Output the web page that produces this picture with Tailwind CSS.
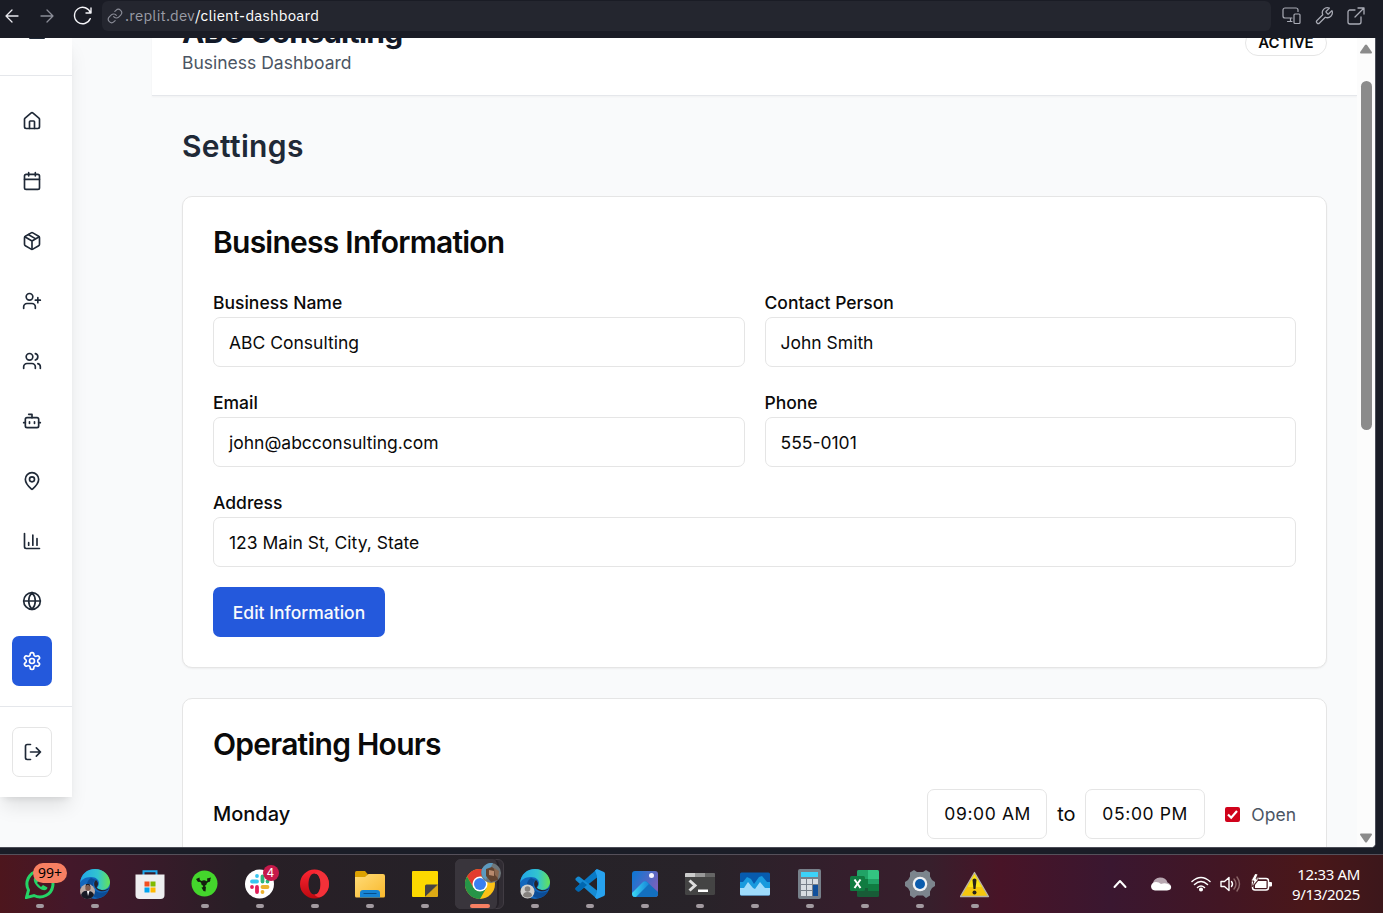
<!DOCTYPE html>
<html lang="en">
<head>
<meta charset="utf-8">
<title>Client Dashboard</title>
<script src="https://cdn.jsdelivr.net/npm/@tailwindcss/browser@4"></script>
</head>
<body class="flex h-screen w-screen flex-col overflow-hidden bg-[#1a1d27] font-['Inter',sans-serif] text-[17.5px] text-[#0a0a0a]">

<!-- Browser bar -->
<header class="flex h-[38px] shrink-0 items-start bg-[#1a1c25] font-['IBM_Plex_Sans','Noto_Sans',sans-serif]">
  <div class="flex h-8 w-[102px] items-center gap-[13px] pl-[1px]">
    <svg class="size-[22px] shrink-0" viewBox="0 0 22 22" fill="none" stroke="#e8e8ee" stroke-width="1.3" stroke-linecap="round" stroke-linejoin="round"><path d="M17 11H5m6-6-6 6 6 6"/></svg>
    <svg class="size-[22px] shrink-0" viewBox="0 0 22 22" fill="none" stroke="#8b8d98" stroke-width="1.3" stroke-linecap="round" stroke-linejoin="round"><path d="M5 11h12m-6-6 6 6-6 6"/></svg>
    <svg class="size-[22px] shrink-0" viewBox="0 0 22 22" fill="none" stroke="#f4f4f8" stroke-width="1.4" stroke-linecap="round" stroke-linejoin="round"><path d="M20 3v5h-5M19.500 8A8.200 8.200 0 1 0 19.300 13.600"/></svg>
  </div>
  <div class="mt-px flex h-[30px] w-[1169px] items-center rounded-md bg-[#24262f] pl-[5px] text-[15px] leading-5 tracking-[0.22px] text-white">
    <svg class="mr-[2px] size-4" viewBox="0 0 24 24" fill="none" stroke="#8b8d98" stroke-width="1.7" stroke-linecap="round"><path d="M10 13a5 5 0 0 0 7.540.540l3-3a5 5 0 0 0-7.070-7.070l-1.720 1.710M14 11a5 5 0 0 0-7.540-.540l-3 3a5 5 0 0 0 7.070 7.070l1.710-1.710"/></svg>
    <p><span class="text-[#9a9ca6]">.replit.dev</span>/client-dashboard</p>
  </div>
  <div class="flex h-8 items-center gap-[13px] pl-[10px] text-[#a9abb5]">
    <svg class="size-5" viewBox="0 0 20 20" fill="none" stroke="currentColor" stroke-width="1.2" stroke-linejoin="round" stroke-linecap="round"><path d="M17 5.500V4a2 2 0 0 0-2-2H4a2 2 0 0 0-2 2v6a2 2 0 0 0 2 2h7M9.500 12v3.500M6.500 15.500H11"/><rect x="13" y="8" width="6" height="9.500" rx="1"/></svg>
    <svg class="size-5" viewBox="0 0 24 24" fill="none" stroke="currentColor" stroke-width="1.5" stroke-linejoin="round"><path d="M14.700 6.300a1 1 0 0 0 0 1.400l1.600 1.600a1 1 0 0 0 1.400 0l3.770-3.770a6 6 0 0 1-7.940 7.940l-6.910 6.910a2.120 2.120 0 0 1-3-3l6.910-6.910a6 6 0 0 1 7.940-7.940l-3.760 3.760z"/></svg>
    <svg class="-ml-px size-5" viewBox="0 0 20 20" fill="none" stroke="currentColor" stroke-width="1.300" stroke-linecap="round" stroke-linejoin="round"><path d="M9 4H4a2 2 0 0 0-2 2v10a2 2 0 0 0 2 2h9a2 2 0 0 0 2-2v-5M12 2h6v6M18 2l-9 9"/></svg>
  </div>
</header>

<!-- Page viewport -->
<div class="flex h-[810px] w-[1376px] shrink-0 overflow-hidden rounded-br-[5px] border-r border-b border-[#4b4d57] bg-[#f9fafb]">
  <aside class="z-10 flex h-[759px] w-[72px] shrink-0 flex-col bg-white text-[#1f2937] shadow-[0_12px_18px_-3px_rgb(0_0_0/0.1),0_5px_7px_-4px_rgb(0_0_0/0.1)]">
    <div class="flex h-[38px] shrink-0 justify-center border-b border-[#e5e7eb]"><div class="ml-[2px] h-px w-4 rounded-b-sm bg-[#1f2937]"></div></div>
    <nav class="flex flex-col gap-[10px] px-3 py-5">
      <a class="flex h-[50px] w-10 items-center justify-center"><svg class="size-5" viewBox="0 0 24 24" fill="none" stroke="currentColor" stroke-width="2" stroke-linecap="round" stroke-linejoin="round"><path d="M15 21v-8a1 1 0 0 0-1-1h-4a1 1 0 0 0-1 1v8"/><path d="M3 10a2 2 0 0 1 .709-1.528l7-5.999a2 2 0 0 1 2.582 0l7 5.999A2 2 0 0 1 21 10v9a2 2 0 0 1-2 2H5a2 2 0 0 1-2-2z"/></svg></a>
      <a class="flex h-[50px] w-10 items-center justify-center"><svg class="size-5" viewBox="0 0 24 24" fill="none" stroke="currentColor" stroke-width="2" stroke-linecap="round" stroke-linejoin="round"><path d="M8 2v4M16 2v4M3 10h18"/><rect width="18" height="18" x="3" y="4" rx="2"/></svg></a>
      <a class="flex h-[50px] w-10 items-center justify-center"><svg class="size-5" viewBox="0 0 24 24" fill="none" stroke="currentColor" stroke-width="2" stroke-linecap="round" stroke-linejoin="round"><path d="M11 21.730a2 2 0 0 0 2 0l7-4A2 2 0 0 0 21 16V8a2 2 0 0 0-1-1.730l-7-4a2 2 0 0 0-2 0l-7 4A2 2 0 0 0 3 8v8a2 2 0 0 0 1 1.730z"/><path d="M12 22V12M3.300 7 12 12l8.700-5M7.500 4.270l9 5.150"/></svg></a>
      <a class="flex h-[50px] w-10 items-center justify-center"><svg class="size-5" viewBox="0 0 24 24" fill="none" stroke="currentColor" stroke-width="2" stroke-linecap="round" stroke-linejoin="round"><path d="M16 21v-2a4 4 0 0 0-4-4H6a4 4 0 0 0-4 4v2"/><circle cx="9" cy="7" r="4"/><path d="M19 8v6M22 11h-6"/></svg></a>
      <a class="flex h-[50px] w-10 items-center justify-center"><svg class="size-5" viewBox="0 0 24 24" fill="none" stroke="currentColor" stroke-width="2" stroke-linecap="round" stroke-linejoin="round"><path d="M16 21v-2a4 4 0 0 0-4-4H6a4 4 0 0 0-4 4v2"/><circle cx="9" cy="7" r="4"/><path d="M22 21v-2a4 4 0 0 0-3-3.870M16 3.130a4 4 0 0 1 0 7.750"/></svg></a>
      <a class="flex h-[50px] w-10 items-center justify-center"><svg class="size-5" viewBox="0 0 24 24" fill="none" stroke="currentColor" stroke-width="2" stroke-linecap="round" stroke-linejoin="round"><path d="M12 8V4H8"/><rect width="16" height="12" x="4" y="8" rx="2"/><path d="M2 14h2M20 14h2M15 13v2M9 13v2"/></svg></a>
      <a class="flex h-[50px] w-10 items-center justify-center"><svg class="size-5" viewBox="0 0 24 24" fill="none" stroke="currentColor" stroke-width="2" stroke-linecap="round" stroke-linejoin="round"><path d="M20 10c0 4.993-5.539 10.193-7.399 11.799a1 1 0 0 1-1.202 0C9.539 20.193 4 14.993 4 10a8 8 0 0 1 16 0"/><circle cx="12" cy="10" r="3"/></svg></a>
      <a class="flex h-[50px] w-10 items-center justify-center"><svg class="size-5" viewBox="0 0 24 24" fill="none" stroke="currentColor" stroke-width="2" stroke-linecap="round" stroke-linejoin="round"><path d="M3 3v16a2 2 0 0 0 2 2h16M18 17V9M13 17V5M8 17v-3"/></svg></a>
      <a class="flex h-[50px] w-10 items-center justify-center"><svg class="size-5" viewBox="0 0 24 24" fill="none" stroke="currentColor" stroke-width="2" stroke-linecap="round" stroke-linejoin="round"><circle cx="12" cy="12" r="10"/><path d="M12 2a14.500 14.500 0 0 0 0 20 14.500 14.500 0 0 0 0-20M2 12h20"/></svg></a>
      <a class="flex h-[50px] w-10 items-center justify-center rounded-[7px] bg-[#2459dc] text-white"><svg class="size-5" viewBox="0 0 24 24" fill="none" stroke="currentColor" stroke-width="2" stroke-linecap="round" stroke-linejoin="round"><path d="M12.220 2h-.440a2 2 0 0 0-2 2v.180a2 2 0 0 1-1 1.730l-.430.250a2 2 0 0 1-2 0l-.150-.080a2 2 0 0 0-2.730.730l-.220.380a2 2 0 0 0 .730 2.730l.150.100a2 2 0 0 1 1 1.720v.510a2 2 0 0 1-1 1.740l-.150.090a2 2 0 0 0-.730 2.730l.220.380a2 2 0 0 0 2.730.730l.150-.080a2 2 0 0 1 2 0l.430.250a2 2 0 0 1 1 1.730V20a2 2 0 0 0 2 2h.440a2 2 0 0 0 2-2v-.180a2 2 0 0 1 1-1.730l.430-.250a2 2 0 0 1 2 0l.150.080a2 2 0 0 0 2.730-.730l.220-.390a2 2 0 0 0-.730-2.730l-.150-.080a2 2 0 0 1-1-1.740v-.500a2 2 0 0 1 1-1.740l.150-.090a2 2 0 0 0 .730-2.730l-.220-.380a2 2 0 0 0-2.730-.730l-.150.080a2 2 0 0 1-2 0l-.430-.250a2 2 0 0 1-1-1.730V4a2 2 0 0 0-2-2z"/><circle cx="12" cy="12" r="3"/></svg></a>
    </nav>
    <div class="border-t border-[#e5e7eb] px-3 pt-5">
      <a class="flex h-[50px] w-10 items-center justify-center rounded-[7px] border border-[#e5e5e5] pl-[2px]"><svg class="size-5" viewBox="0 0 24 24" fill="none" stroke="currentColor" stroke-width="2" stroke-linecap="round" stroke-linejoin="round"><path d="M9 21H5a2 2 0 0 1-2-2V5a2 2 0 0 1 2-2h4M16 17l5-5-5-5M21 12H9"/></svg></a>
    </div>
  </aside>

  <main class="ml-20 flex w-[1205px] shrink-0 flex-col">
    <div class="flex h-[58px] shrink-0 items-end justify-between border-b border-[#e5e7eb] bg-white px-[30px] shadow-[0_1px_2px_rgb(0_0_0/0.04)]">
      <div class="pb-5">
        <h1 class="text-[30px] leading-9 font-bold tracking-[-0.8px] text-[#111827]">ABC Consulting</h1>
        <p class="leading-[25px] text-[#4b5563]">Business Dashboard</p>
      </div>
      <span class="mb-[39px] flex h-[26px] w-[82px] items-center justify-center rounded-full border border-[#e5e5e5] text-[15px] leading-5 font-semibold">ACTIVE</span>
    </div>

    <div class="flex flex-col px-[30px] pt-[30px]">
      <h2 class="mb-[30px] text-[30px] leading-10 font-semibold tracking-[0.35px] text-[#1f2937]">Settings</h2>

      <section class="mb-[30px] h-[472px] shrink-0 rounded-[10px] border border-[#e5e5e5] bg-white p-[30px] shadow-[0_1px_2px_rgb(0_0_0/0.05)]">
        <h3 class="mb-[30px] text-[30px] leading-[30px] font-semibold tracking-tight">Business Information</h3>
        <div class="grid grid-cols-2 gap-5">
          <label class="flex flex-col"><span class="h-[30px] leading-[32px] font-medium">Business Name</span><span class="flex h-[50px] items-center rounded-[7px] border border-[#e5e5e5] px-[15px] pt-[2px]">ABC Consulting</span></label>
          <label class="flex flex-col"><span class="h-[30px] leading-[32px] font-medium">Contact Person</span><span class="flex h-[50px] items-center rounded-[7px] border border-[#e5e5e5] px-[15px] pt-[2px]">John Smith</span></label>
          <label class="flex flex-col"><span class="h-[30px] leading-[32px] font-medium">Email</span><span class="flex h-[50px] items-center rounded-[7px] border border-[#e5e5e5] px-[15px] pt-[2px]">john@abcconsulting.com</span></label>
          <label class="flex flex-col"><span class="h-[30px] leading-[32px] font-medium">Phone</span><span class="flex h-[50px] items-center rounded-[7px] border border-[#e5e5e5] px-[15px] pt-[2px]">555-0101</span></label>
          <label class="col-span-2 flex flex-col"><span class="h-[30px] leading-[32px] font-medium">Address</span><span class="flex h-[50px] items-center rounded-[7px] border border-[#e5e5e5] px-[15px] pt-[2px]">123 Main St, City, State</span></label>
        </div>
        <button class="mt-5 h-[50px] w-[172px] rounded-[7px] bg-[#2459dc] pt-[2px] font-medium text-[#f8fafc]">Edit Information</button>
      </section>

      <section class="h-[300px] shrink-0 rounded-[10px] border border-[#e5e5e5] bg-white p-[30px]">
        <h3 class="mb-[30px] text-[30px] leading-[30px] font-semibold tracking-tight">Operating Hours</h3>
        <div class="flex h-[50px] items-center">
          <span class="mr-auto text-xl font-medium">Monday</span>
          <span class="flex h-[50px] w-[120px] items-center rounded-[7px] border border-[#e5e5e5] px-4 tracking-[0.6px] whitespace-nowrap">09:00 AM</span>
          <span class="w-[38px] text-center text-xl">to</span>
          <span class="mr-5 flex h-[50px] w-[120px] items-center rounded-[7px] border border-[#e5e5e5] px-4 tracking-[0.6px] whitespace-nowrap">05:00 PM</span>
          <svg class="mr-[11px] size-[15px]" viewBox="0 0 15 15"><rect width="15" height="15" rx="2" fill="#d0021b"/><path d="m3 7.500 3.200 3.200L12 4" fill="none" stroke="#fff" stroke-width="2.200"/></svg>
          <span class="pt-[2px] text-[#4b5563]">Open</span>
        </div>
      </section>
    </div>
  </main>

  <div class="flex w-[18px] shrink-0 flex-col items-center bg-[#fcfcfc]">
    <svg class="mt-[6px] h-[10px] w-3 shrink-0" viewBox="0 0 12 10"><path d="M5 1Q6 0 7 1l5 7.200q0 1.300-1 1.300H1q-1 0-1-1.300z" fill="#8b8b8b"/></svg>
    <div class="mt-[27px] h-[349px] w-[11px] shrink-0 rounded-full bg-[#8b8b8b]"></div>
    <svg class="mt-auto mb-[4px] h-[10px] w-3 shrink-0 rotate-180" viewBox="0 0 12 10"><path d="M5 1Q6 0 7 1l5 7.200q0 1.300-1 1.300H1q-1 0-1-1.300z" fill="#8b8b8b"/></svg>
  </div>
</div>

<!-- Taskbar -->
<footer class="mt-[6px] flex h-[59px] shrink-0 border-t border-[#55505a] bg-[linear-gradient(90deg,#4d161d_0,#43182a_70px,#3a1a2a_140px,#281f26_240px,#252228_500px,#282329_700px,#351e2c_850px,#371f2c_930px,#481427_1000px,#3a1730_1110px,#421624_1220px,#4a1719_1310px,#3c171b_1383px)] pl-[12.500px]">
  <!-- WhatsApp -->
  <div class="relative flex w-[55px] flex-col items-center pt-[14px]">
    <svg class="size-[30px]" viewBox="0 0 30 30"><path d="m1.500 28.500 2-7.400A13 13 0 1 1 9 26.500z" fill="none" stroke="#25d366" stroke-width="3"/><path d="M10 8c-3 2 0 8 4 11s8 3 8.500-.5L18 16l-2 2-4-4 1.500-2L11.500 8z" fill="#25d366"/></svg>
    <span class="mt-[5px] h-1 w-2 rounded-full bg-[#a29aa0]"></span>
    <span class="absolute top-[8px] left-[20.500px] flex h-5 w-[34px] items-center justify-center rounded-full bg-[#f77f62] font-['Noto_Sans',sans-serif] text-[14px] leading-5 text-black">99+</span>
  </div>
  <!-- Edge -->
  <div class="relative flex w-[55px] flex-col items-center pt-[14px]">
    <svg class="size-[30px]" viewBox="0 0 30 30"><defs><linearGradient id="eg"><stop stop-color="#21a5ea"/><stop offset=".6" stop-color="#32c5cf"/><stop offset="1" stop-color="#65e256"/></linearGradient></defs><circle cx="15" cy="15" r="15" fill="#1267bd"/><path d="M0 14C1 5 7 0 15 0c9 0 15 7 15 13 0 5-4 8-8 8-3 0-5-1-5-2s2-2 2-5c0-3-3-6-8-6-6 0-10 3-11 6z" fill="url(#eg)"/><path d="M11 9c-8 5-4 18 7 20 5 0 9-4 10-7-9 4-15 0-15-6 0-3 2-5 3-5z" fill="#0b4c96"/><path d="M17 19c-1-1 1-2 1-4 0-2-1-3-2-4-4 3-1 10 4 11 4 1 9-1 10-4-3 4-9 4-13 1z" fill="#252129"/><circle cx="7.500" cy="22.500" r="7.500" fill="#b9aaa5"/><circle cx="8" cy="19" r="2.700" fill="#805d50"/><path d="M5.500 18q2-4 5 0l-1-3H6z" fill="#241d20"/><path d="M1 26q2-5 7-4 5 0 6 4-2 4-7 4-4 0-6-4z" fill="#171a25"/><path d="m7 22 1 5 1.500-5z" fill="#fff"/></svg>
    <span class="mt-[5px] h-1 w-2 rounded-full bg-[#a29aa0]"></span>
  </div>
  <!-- Store -->
  <div class="flex w-[55px] flex-col items-center pt-[14px]">
    <svg class="size-[30px]" viewBox="0 0 30 30"><path d="M8.500 7V2.200h13V7" fill="none" stroke="#20a9ee" stroke-width="2"/><path d="M.5 5.500h29V26q0 4-4 4h-21q-4 0-4-4z" fill="#eeeef0"/><path d="M9.500 12.500h5v5h-5z" fill="#f25022"/><path d="M15.500 12.500h5v5h-5z" fill="#7fba00"/><path d="M9.500 18.500h5v5h-5z" fill="#00a4ef"/><path d="M15.500 18.500h5v5h-5z" fill="#ffb900"/></svg>
  </div>
  <!-- Razer -->
  <div class="flex w-[55px] flex-col items-center pt-[14px]">
    <svg class="size-[30px]" viewBox="0 0 30 30"><circle cx="14.500" cy="14.500" r="13" fill="#44d62c"/><path d="M14.500 14.500 8 11M14.500 14.500 20 11M14 14v6" fill="none" stroke="#14210f" stroke-width="1.800"/><circle cx="14" cy="14" r="2.800" fill="#14210f"/><path d="m6 10 3.500-1.500.5 4-2 .5zM17 9.500l4-1-1.500 4.500-2-.5zM11.500 18.500l4.500-1-.5 5-2-.5z" fill="#14210f"/></svg>
    <span class="mt-[5px] h-1 w-2 rounded-full bg-[#a29aa0]"></span>
  </div>
  <!-- Slack -->
  <div class="relative flex w-[55px] flex-col items-center pt-[14px]">
    <svg class="size-[30px]" viewBox="0 0 30 30"><circle cx="14.500" cy="15" r="14.500" fill="#fff"/><g fill="none" stroke-width="3.800" stroke-linecap="round"><path d="M12 12.500H7M12 7v0" stroke="#36c5f0"/><path d="M17.500 12.500v-5M22.500 12.500v0" stroke="#2eb67d"/><path d="M17.500 18h5M17.500 23v0" stroke="#ecb22e"/><path d="M12 18v5M7 18v0" stroke="#e01e5a"/></g></svg>
    <span class="mt-[5px] h-1 w-2 rounded-full bg-[#a29aa0]"></span>
    <span class="absolute top-[10px] left-[30px] flex size-4 items-center justify-center rounded-full bg-[#c51a4a] text-[12px] leading-4 text-white">4</span>
  </div>
  <!-- Opera -->
  <div class="flex w-[55px] flex-col items-center pt-[14px]">
    <svg class="size-[30px]" viewBox="0 0 30 30"><defs><linearGradient id="op" x2="0" y2="1"><stop stop-color="#ff2633"/><stop offset="1" stop-color="#bb0910"/></linearGradient></defs><path fill-rule="evenodd" d="M14.500.5a14.500 14.500 0 0 0 0 29 14.500 14.500 0 0 0 0-29m0 4c4 0 6 5 6 10.500s-2 10.500-6 10.500S8.500 20.500 8.500 15s2-10.500 6-10.500" fill="url(#op)"/><path d="M14.500 25.500c4 0 6-5 6-10.500s-2-10.500-6-10.500C17 1 21 1 24.500 4.500a14.500 14.500 0 0 1 0 21C21 29 17 29 14.500 25.500z" fill="#f33139"/></svg>
    <span class="mt-[5px] h-1 w-2 rounded-full bg-[#a29aa0]"></span>
  </div>
  <!-- Explorer -->
  <div class="flex w-[55px] flex-col items-center pt-[14px]">
    <svg class="size-[30px]" viewBox="0 0 30 30"><defs><linearGradient id="fo" x2="1" y2="1"><stop stop-color="#ffdc78"/><stop offset="1" stop-color="#f9b82c"/></linearGradient></defs><path d="M0 3.500Q0 2 1.500 2H10l3 3.500-3 4H0z" fill="#dca100"/><path d="M0 8h10l3.500-3H28q2 0 2 2v20q0 1.500-1.500 1.500h-27Q0 28.500 0 27z" fill="url(#fo)"/><path d="M5 28.500V24q0-3 3-3h14q3 0 3 3v4.500z" fill="#1684d4"/><path d="M8.500 24.500h13" stroke="#064f8c" stroke-width="1"/></svg>
    <span class="mt-[5px] h-1 w-2 rounded-full bg-[#a29aa0]"></span>
  </div>
  <!-- Sticky notes -->
  <div class="flex w-[55px] flex-col items-center pt-[14px]">
    <svg class="size-[30px]" viewBox="0 0 30 30"><path d="M2 3q0-1 1-1h24q1 0 1 1v12.500L15.500 28H3q-1 0-1-1z" fill="#fcd800"/><path d="M15 17q0-1.500 1.500-1.500H28L15 28z" fill="#454343"/><path d="M28 15.500V27q0 1-1 1H15z" fill="#dca914"/></svg>
    <span class="mt-[5px] h-1 w-2 rounded-full bg-[#a29aa0]"></span>
  </div>
  <!-- Chrome -->
  <div class="relative flex w-[55px] flex-col items-center pt-[14px]">
    <span class="absolute top-[4px] left-[2.500px] h-[50px] w-[49px] rounded-md border border-[#413c43] bg-[#302c33]"></span>
    <span class="absolute top-[4px] left-[2.500px] h-[50px] w-[44px] rounded-md border-r-2 border-[#252128] bg-[#39353c]"></span>
    <svg class="relative size-[30px]" viewBox="0 0 30 30"><circle cx="15" cy="15" r="15" fill="#fbc116"/><path d="M2 7.500A15 15 0 0 1 28 7.500H15L8.500 18.800z" fill="#e33b2e"/><path d="M2 7.500A15 15 0 0 0 15 30l6.500-11.200H8.500z" fill="#269447"/><circle cx="15" cy="15" r="7.500" fill="#fff"/><circle cx="15" cy="15" r="6" fill="#397ff0"/></svg>
    <svg class="absolute top-[8px] left-[28px] size-5" viewBox="0 0 20 20"><circle cx="10" cy="10" r="10" fill="#6e777b"/><path d="M1 6Q5-1 12 0L8 8l-3 9Q-1 13 1 6z" fill="#5c9ac0"/><path d="m5 6 6-2 5 4 1 9-7 2-5-6z" fill="#624330"/><path d="m8 7 5 1v5l-5-1z" fill="#b98a6e"/><path d="m13 5 5 3-1 7-3-3z" fill="#8b6851"/></svg>
    <span class="relative mt-[5px] h-1 w-5 rounded-full bg-[#f77f62]"></span>
  </div>
  <!-- Edge, guest profile -->
  <div class="flex w-[55px] flex-col items-center pt-[14px]">
    <svg class="size-[30px]" viewBox="0 0 30 30"><circle cx="15" cy="15" r="15" fill="#1267bd"/><path d="M0 14C1 5 7 0 15 0c9 0 15 7 15 13 0 5-4 8-8 8-3 0-5-1-5-2s2-2 2-5c0-3-3-6-8-6-6 0-10 3-11 6z" fill="url(#eg)"/><path d="M11 9c-8 5-4 18 7 20 5 0 9-4 10-7-9 4-15 0-15-6 0-3 2-5 3-5z" fill="#0b4c96"/><path d="M17 19c-1-1 1-2 1-4 0-2-1-3-2-4-4 3-1 10 4 11 4 1 9-1 10-4-3 4-9 4-13 1z" fill="#252129"/><circle cx="7.500" cy="22.500" r="7" fill="#d0cfcd"/><circle cx="7.500" cy="20" r="2.800" fill="#85817e"/><path d="M3 27q0-4 4.500-4t4.500 4q-4 3-9 0z" fill="#85817e"/></svg>
    <span class="mt-[5px] h-1 w-2 rounded-full bg-[#a29aa0]"></span>
  </div>
  <!-- VS Code -->
  <div class="flex w-[55px] flex-col items-center pt-[14px]">
    <svg class="size-[30px]" viewBox="0 0 30 30"><path d="m.5 19 0 1.500 2 1.800q1 .5 2 0L22 8.500V0z" fill="#0879c6"/><path d="M.5 11V9.500l2-1.800q1-.5 2 0L22 21.500V30z" fill="#168bd3"/><path d="m.5 19 0 1.500 2 1.800q1 .5 2 0L12 16l-4.500-3.500z" fill="#0067b0"/><path d="m22 0 7 3q1 .5 1 2v20q0 1.500-1 2l-7 3-2-1.500 2-5.500V7l-2-5.500z" fill="#27a2ee"/></svg>
    <span class="mt-[5px] h-1 w-2 rounded-full bg-[#a29aa0]"></span>
  </div>
  <!-- Photos -->
  <div class="flex w-[55px] flex-col items-center pt-[14px]">
    <svg class="size-[30px]" viewBox="0 0 30 30"><defs><linearGradient id="ph" x2="1" y2=".5"><stop stop-color="#0878d5"/><stop offset="1" stop-color="#7761bd"/></linearGradient><linearGradient id="pm" x2="1"><stop stop-color="#3bdaf5"/><stop offset="1" stop-color="#1686d9"/></linearGradient></defs><rect x="2" y="2" width="26" height="26" rx="3" fill="url(#ph)"/><path d="m3 24 11-11q1.500-1.500 3 0L28 23v2q0 3-3 3H5q-3 0-2-4z" fill="#1370c0"/><path d="m2 24 11-11q2-1.500 4 0l2 2L6 28H5q-3 0-3-4z" fill="url(#pm)"/><circle cx="21.500" cy="6.500" r="2.500" fill="#f5f4ff"/></svg>
    <span class="mt-[5px] h-1 w-2 rounded-full bg-[#a29aa0]"></span>
  </div>
  <!-- Terminal -->
  <div class="flex w-[55px] flex-col items-center pt-[14px]">
    <svg class="size-[30px]" viewBox="0 0 30 30"><rect y="4" width="30" height="22" rx="1.500" fill="#444"/><path d="M0 8V5q0-1 1-1h9v4z" fill="#ccc"/><path d="M10 4h10v4H10z" fill="#999"/><path d="M20 4h9q1 0 1 1v3H20z" fill="#666"/><path d="m4.500 11.500 5.500 5-5.500 5" fill="none" stroke="#ddd" stroke-width="3"/><path d="M13 20.500h10V23H13z" fill="#fff"/></svg>
    <span class="mt-[5px] h-1 w-2 rounded-full bg-[#a29aa0]"></span>
  </div>
  <!-- Task monitor -->
  <div class="flex w-[55px] flex-col items-center pt-[14px]">
    <svg class="size-[30px]" viewBox="0 0 30 30"><rect y="3.500" width="30" height="23" rx="1.500" fill="#075bae"/><path d="M0 13h3l4-5 4 2 3 5 5-7 3-1 5 6h3v12H0z" fill="#189ade"/><path d="M0 19h4l4-6 5 6 2 1 5-7 5 6h5v6q0 1.500-1.500 1.500h-27Q0 26.500 0 25z" fill="#9edbfb"/></svg>
    <span class="mt-[5px] h-1 w-2 rounded-full bg-[#a29aa0]"></span>
  </div>
  <!-- Calculator -->
  <div class="flex w-[55px] flex-col items-center pt-[14px]">
    <svg class="size-[30px]" viewBox="0 0 30 30"><rect x="3" width="23" height="30" rx="2" fill="#77808a"/><path d="M6 3h17v5H6z" fill="#3cd2f8"/><path d="M6 10h5v5H6zm6 0h5v5h-5zm6 0h5v5h-5zM6 16h5v5H6zm6 0h5v5h-5zM6 22h5v5H6zm6 0h5v5h-5z" fill="#d7dde2"/><path d="M18 16h5v11h-5z" fill="#10509c"/></svg>
    <span class="mt-[5px] h-1 w-2 rounded-full bg-[#a29aa0]"></span>
  </div>
  <!-- Excel -->
  <div class="flex w-[55px] flex-col items-center pt-[14px]">
    <svg class="size-[30px]" viewBox="0 0 30 30"><rect x="7" y="1" width="22" height="27" rx="1.500" fill="#185c37"/><path d="M7 10V2.500Q7 1 8.500 1H18v9z" fill="#21a366"/><path d="M18 1h9.500Q29 1 29 2.500V10H18z" fill="#33c481"/><path d="M7 10h11v9H7z" fill="#107c41"/><path d="M18 10h11v9H18z" fill="#21a366"/><path d="M18 15h11v7H18z" fill="#107c41"/><rect y="7" width="15" height="15" rx="1.500" fill="#107c41"/><path d="m4.500 10.500 6 8.500m0-8.500-6 8.500" stroke="#fff" stroke-width="2"/></svg>
    <span class="mt-[5px] h-1 w-2 rounded-full bg-[#a29aa0]"></span>
  </div>
  <!-- Settings -->
  <div class="flex w-[55px] flex-col items-center pt-[14px]">
    <svg class="size-[30px]" viewBox="0 0 30 30"><path d="m9 1 3 2h6l3-2 4 2.500v4l2 3.500 3 2v4l-3 2-2 3.500v4L21 29l-3-2.500h-6L9 29l-4-2.500v-4L3 19l-3-2v-4l3-2 2-3.500v-4z" fill="#7c858d"/><circle cx="15" cy="15" r="7.300" fill="#f0f2f4"/><circle cx="15" cy="15" r="5" fill="#0b5cad"/></svg>
    <span class="mt-[5px] h-1 w-2 rounded-full bg-[#a29aa0]"></span>
  </div>
  <!-- Warning -->
  <div class="flex w-[55px] flex-col items-center pt-[14px]">
    <svg class="size-[30px]" viewBox="0 0 30 30"><path d="M14.500 3.500 28.500 27.500H.5z" fill="#f5c70e" stroke="#b8b4a8" stroke-width="1.300" stroke-linejoin="round"/><path d="M14.500 5.500 22 18H7.500z" fill="#f9e418"/><path d="M12.500 11q0-1.500 2-1.500t2 1.500l-1 9h-2z" fill="#28221a"/><circle cx="14.500" cy="23.500" r="2" fill="#28221a"/></svg>
    <span class="mt-[5px] h-1 w-2 rounded-full bg-[#a29aa0]"></span>
  </div>

  <!-- System tray -->
  <div class="ml-auto flex h-[57px] items-center pr-[23px] text-white">
    <svg class="mr-[22px] h-5 w-4" viewBox="0 0 16 20" fill="none" stroke="#fff" stroke-width="2" stroke-linecap="round" stroke-linejoin="round"><path d="m2.500 13 5.500-6 5.500 6"/></svg>
    <svg class="mr-[19px] h-5 w-[22px]" viewBox="0 0 22 20"><path d="M3 9Q4 4 10 3.500q6 0 7.500 5Q21 10 21 13l-8 2-10-4z" fill="#b8a7b1"/><path d="M1 12q1-4 5-4 3 0 5 2 6-2 10 2 1 4-4 4.500H5Q1 16 1 12z" fill="#fff"/></svg>
    <svg class="mr-[9px] h-5 w-5" viewBox="0 0 20 20" fill="none" stroke="#fff" stroke-width="1.500" stroke-linecap="round"><path d="M1 7.500q9-8 18 0M3.500 10.500q6.500-6 13 0M6.500 13.500q3.500-3 7 0"/><circle cx="10" cy="15.500" r="1.300" fill="#fff"/></svg>
    <svg class="mr-[10px] h-5 w-[21px]" viewBox="0 0 21 20" fill="none" stroke="#fff" stroke-width="1.400" stroke-linecap="round" stroke-linejoin="round"><path d="M1 7.500h3.500L9 3.500v13l-4.500-4H1zM11.500 7.500q2 2.500 0 5"/><path d="M14 5q4 5 0 10M17 3q5 7 0 14" stroke="#8d686a"/></svg>
    <svg class="mr-[20px] h-5 w-[21px]" viewBox="0 0 21 20"><rect x="1.500" y="4.500" width="16" height="11.500" rx="2.500" fill="none" stroke="#fff" stroke-width="1.500"/><path d="M7 7h8.500v7H4v-3z" fill="#fff"/><path d="M18 8h2q1 0 1 1v2.500q0 1-1 1h-2z" fill="#fff"/><path d="M4-.5 0 7h3l-2 6 7-8H5l2-5z" fill="#fff" stroke="#45171b" stroke-width=".8"/></svg>
    <div class="text-right font-['Noto_Sans',sans-serif] text-[15px] leading-5 tracking-[-0.350px]"><div>12:33 AM</div><div>9/13/2025</div></div>
  </div>
</footer>
</body>
</html>
